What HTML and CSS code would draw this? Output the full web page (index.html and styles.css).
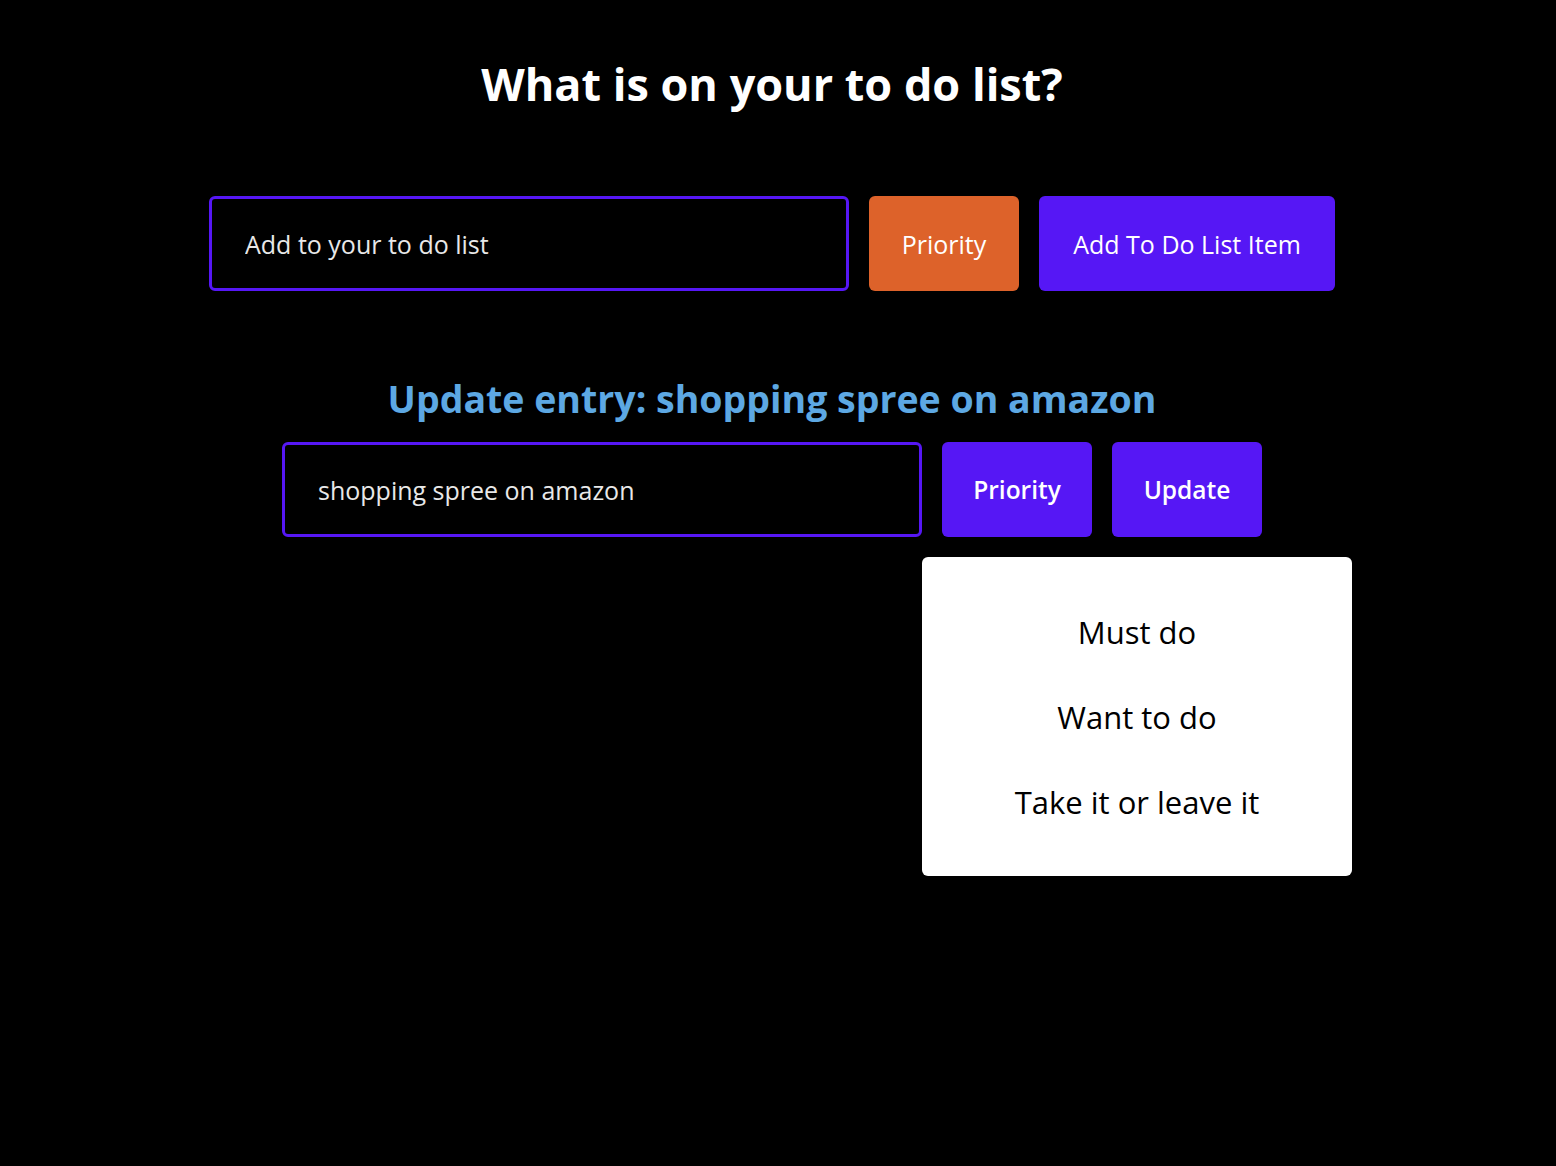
FILE: index.html
```html
<!DOCTYPE html>
<html lang="en">
<head>
<meta charset="utf-8">
<title>To do list</title>
<link rel="stylesheet" href="styles.css">
</head>
<body>
<div class="app">
  <h1 class="title">What is on your to do list?</h1>
  <form class="row row-add">
    <input class="field" type="text" placeholder="Add to your to do list">
    <button type="button" class="btn btn-orange">Priority</button>
    <button type="button" class="btn btn-wide">Add To Do List Item</button>
  </form>
  <h2 class="subtitle">Update entry: shopping spree on amazon</h2>
  <form class="row row-update">
    <input class="field" type="text" value="shopping spree on amazon">
    <div class="menu-wrap">
      <button type="button" class="btn btn-strong">Priority</button>
      <ul class="menu">
        <li>Must do</li>
        <li>Want to do</li>
        <li>Take it or leave it</li>
      </ul>
    </div>
    <button type="button" class="btn btn-strong">Update</button>
  </form>
</div>
</body>
</html>
```

FILE: styles.css
```css
html, body {
  margin: 0;
  padding: 0;
  background: #000;
}
body {
  font-family: "Open Sans", "Lato", sans-serif;
  color: #fff;
  min-height: 1166px;
}
.app {
  width: 1544px;
  display: flex;
  flex-direction: column;
  align-items: center;
}
.title {
  margin: 54px 0 0;
  font-size: 45px;
  line-height: 60px;
  font-weight: 700;
}
.row {
  display: flex;
  gap: 20px;
  align-items: stretch;
}
.row-add {
  margin-top: 82px;
}
.field {
  box-sizing: border-box;
  width: 640px;
  height: 95px;
  background: #000;
  border: 3px solid #5617f5;
  border-radius: 6px;
  padding: 0 33px;
  font-family: inherit;
  font-size: 25px;
  color: #e8e8e8;
  outline: none;
}
.field::placeholder {
  color: #e8e8e8;
  opacity: 1;
}
.btn {
  box-sizing: border-box;
  width: 150px;
  height: 95px;
  padding: 0;
  border: none;
  border-radius: 6px;
  background: #5617f5;
  color: #fff;
  font-family: inherit;
  font-size: 25px;
  cursor: pointer;
}
.btn-wide {
  width: 296px;
}
.btn-orange {
  background: #dd622a;
}
.btn-strong {
  font-weight: 600;
  font-size: 24.5px;
}
.subtitle {
  margin: 86px 0 0;
  font-size: 37.5px;
  line-height: 44px;
  font-weight: 700;
  color: #5da8e3;
}
.row-update {
  margin-top: 21px;
}
.menu-wrap {
  position: relative;
  display: flex;
}
.menu {
  position: absolute;
  left: -20px;
  top: calc(100% + 20px);
  width: 430px;
  height: 319px;
  box-sizing: border-box;
  margin: 0;
  padding: 50px 0 0;
  list-style: none;
  background: #fff;
  border-radius: 6px;
  color: #000;
  font-size: 31px;
  text-align: center;
}
.menu li {
  height: 85px;
  line-height: 50px;
}
```
